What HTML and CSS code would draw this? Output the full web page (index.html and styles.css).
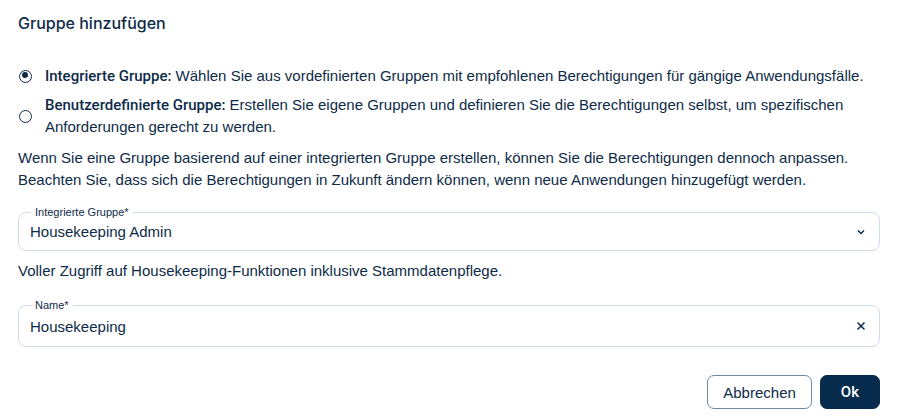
FILE: index.html
```html
<!DOCTYPE html>
<html lang="de">
<head>
<meta charset="utf-8">
<title>Gruppe hinzufügen</title>
<link rel="stylesheet" href="styles.css">
</head>
<body>
<div class="dialog">
  <h1 class="title">Gruppe hinzufügen</h1>
  <div class="radios">
    <label class="radio">
      <span class="dot checked"></span>
      <span class="rtext"><b>Integrierte Gruppe:</b> Wählen Sie aus vordefinierten Gruppen mit empfohlenen Berechtigungen für gängige Anwendungsfälle.</span>
    </label>
    <label class="radio">
      <span class="dot"></span>
      <span class="rtext"><b>Benutzerdefinierte Gruppe:</b> Erstellen Sie eigene Gruppen und definieren Sie die Berechtigungen selbst, um spezifischen Anforderungen gerecht zu werden.</span>
    </label>
  </div>
  <p class="info">Wenn Sie eine Gruppe basierend auf einer integrierten Gruppe erstellen, können Sie die Berechtigungen dennoch anpassen. Beachten Sie, dass sich die Berechtigungen in Zukunft ändern können, wenn neue Anwendungen hinzugefügt werden.</p>
  <div class="field select">
    <span class="flabel">Integrierte Gruppe*</span>
    <span class="value">Housekeeping Admin</span>
    <svg class="icon" width="10" height="10" viewBox="0 0 10 10"><path d="M2 3.5 L5 6.5 L8 3.5" fill="none" stroke="#0d2b48" stroke-width="1.5"/></svg>
  </div>
  <p class="helper">Voller Zugriff auf Housekeeping-Funktionen inklusive Stammdatenpflege.</p>
  <div class="field name">
    <span class="flabel">Name*</span>
    <span class="value">Housekeeping</span>
    <svg class="icon" width="10" height="10" viewBox="0 0 10 10"><path d="M1.5 1.5 L8.5 8.5 M8.5 1.5 L1.5 8.5" fill="none" stroke="#0d2b48" stroke-width="1.5"/></svg>
  </div>
  <div class="actions">
    <button class="btn secondary">Abbrechen</button>
    <button class="btn primary">Ok</button>
  </div>
</div>
</body>
</html>
```
FILE: styles.css
```css
html, body { margin: 0; padding: 0; background: #fff; }
body {
  font-family: "Liberation Sans", Arial, sans-serif;
  color: #0d2b48;
  font-size: 15px;
}
.dialog {
  padding: 12px 20px 0 18px;
  display: flex;
  flex-direction: column;
}
.title {
  margin: 0;
  font-size: 16px;
  font-weight: 500;
  line-height: 22px;
  font-family: "Inter", sans-serif;
}
.radios {
  margin-top: 31px;
  display: flex;
  flex-direction: column;
  gap: 7px;
}
.radio {
  display: flex;
  align-items: center;
  gap: 13px;
  line-height: 22px;
}
.dot {
  flex: none;
  box-sizing: border-box;
  width: 13px;
  height: 13px;
  border: 1.8px solid #0d2b48;
  border-radius: 50%;
  margin-left: 1px;
  position: relative;
}
.dot.checked::after {
  content: "";
  position: absolute;
  left: 1.7px; top: 1.7px;
  width: 6px; height: 6px;
  border-radius: 50%;
  background: #0d2b48;
}
.rtext b {
  font-family: "Roboto", sans-serif;
  font-weight: 500;
}
.info {
  margin: 9px 0 0;
  line-height: 22px;
}
.field {
  position: relative;
  box-sizing: border-box;
  border: 1px solid #cfdcec;
  border-radius: 8px;
  display: flex;
  align-items: center;
  padding: 0 13px 0 11px;
  height: 39px;
  margin-top: 21px;
}
.flabel {
  position: absolute;
  top: -8px;
  left: 12px;
  padding: 0 4px;
  background: #fff;
  font-size: 11px;
  line-height: 14px;
}
.value { flex: 1; }
.icon { flex: none; }
.helper { margin: 9px 0 0; line-height: 22px; }
.field.name { margin-top: 23px; height: 42px; }
.actions {
  display: flex;
  justify-content: flex-end;
  gap: 8px;
  margin-top: 28px;
}
.btn {
  font-family: inherit;
  font-size: 15px;
  height: 34px;
  border-radius: 7px;
  cursor: pointer;
}
.btn.secondary {
  background: #fff;
  color: #0d2b48;
  border: 1px solid #6f89a3;
  padding: 0 15px;
}
.btn.primary {
  background: #062b4c;
  color: #fff;
  border: 1px solid #062b4c;
  padding: 0 20px;
  font-family: "Roboto", sans-serif;
  font-weight: 500;
}
```
